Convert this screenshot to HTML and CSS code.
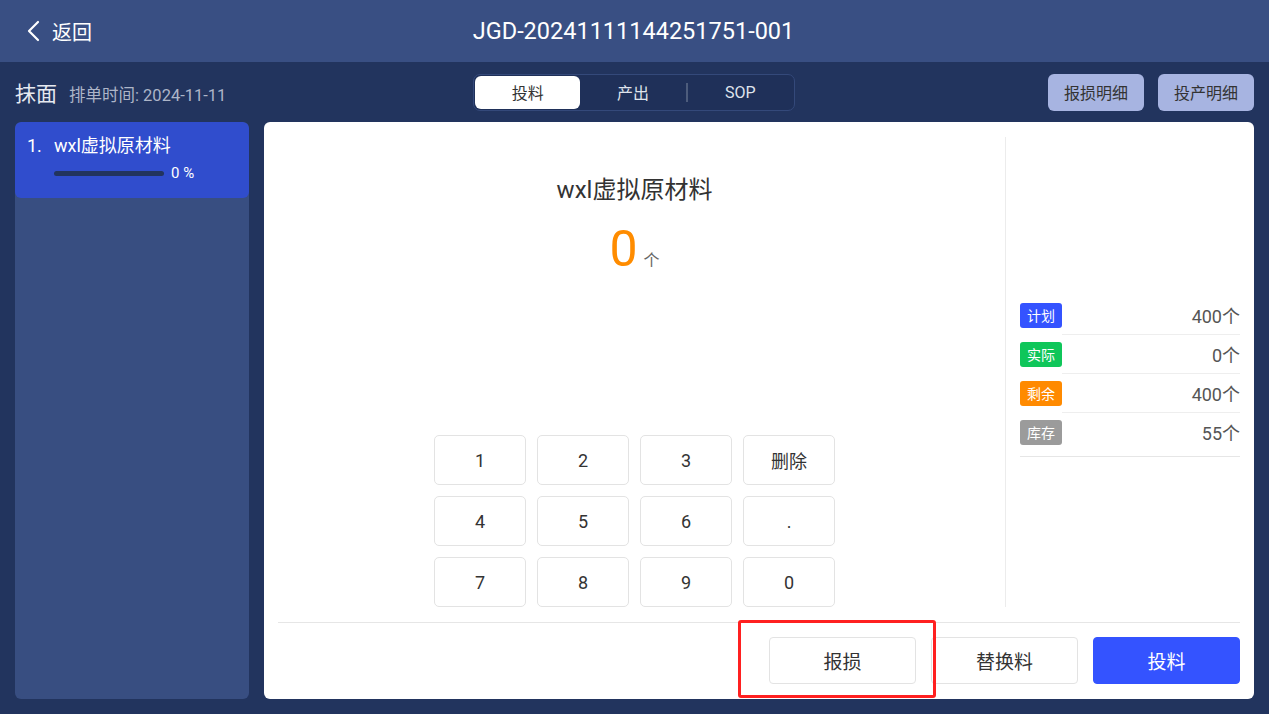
FILE: index.html
```html
<!DOCTYPE html>
<html lang="zh-CN">
<head>
  <meta charset="UTF-8">
  <title>投料</title>
  <link rel="stylesheet" href="styles.css">
</head>
<body>
  <!-- Top bar -->
  <div class="topbar">
    <div class="back">
      <svg class="back-icon" width="16" height="22" viewBox="0 0 16 22">
        <polyline points="12,2 3,11 12,20" fill="none" stroke="#ffffff" stroke-width="2.2" stroke-linecap="round" stroke-linejoin="round"/>
      </svg>
      <span>返回</span>
    </div>
    <div class="order-no">JGD-20241111144251751-001</div>
  </div>

  <!-- Sub header -->
  <div class="subbar">
    <div class="proc">
      <span class="proc-name">抹面</span>
      <span class="proc-date">排单时间: 2024-11-11</span>
    </div>
    <div class="tabs">
      <div class="tab active">投料</div>
      <div class="tab">产出</div>
      <div class="tab tab-sep">SOP</div>
    </div>
    <div class="actions">
      <button class="light-btn">报损明细</button>
      <button class="light-btn">投产明细</button>
    </div>
  </div>

  <div class="main">
    <!-- Material list -->
    <div class="side">
      <div class="item active">
        <div class="item-name"><span class="item-no">1.</span>wxl虚拟原材料</div>
        <div class="item-progress">
          <div class="bar"><div class="bar-fill" style="width: 0%"></div></div>
          <span class="pct">0 %</span>
        </div>
      </div>
    </div>

    <!-- Input card -->
    <div class="card">
      <div class="card-top">
        <div class="entry">
          <div class="mat-name">wxl虚拟原材料</div>
          <div class="qty"><span class="qty-num">0</span><span class="qty-unit">个</span></div>
          <div class="keypad">
            <button class="key">1</button>
            <button class="key">2</button>
            <button class="key">3</button>
            <button class="key">删除</button>
            <button class="key">4</button>
            <button class="key">5</button>
            <button class="key">6</button>
            <button class="key">.</button>
            <button class="key">7</button>
            <button class="key">8</button>
            <button class="key">9</button>
            <button class="key">0</button>
          </div>
        </div>
        <div class="stats">
          <div class="stat-list">
            <div class="stat">
              <span class="tag tag-blue">计划</span>
              <span class="stat-val">400个</span>
            </div>
            <div class="stat">
              <span class="tag tag-green">实际</span>
              <span class="stat-val">0个</span>
            </div>
            <div class="stat">
              <span class="tag tag-orange">剩余</span>
              <span class="stat-val">400个</span>
            </div>
            <div class="stat">
              <span class="tag tag-grey">库存</span>
              <span class="stat-val">55个</span>
            </div>
          </div>
        </div>
      </div>
      <div class="card-bottom">
        <button class="btn">报损</button>
        <button class="btn">替换料</button>
        <button class="btn btn-primary">投料</button>
      </div>
      <div class="highlight"></div>
    </div>
  </div>
</body>
</html>
```

FILE: styles.css
```css
* {
  box-sizing: border-box;
}

body {
  margin: 0;
  height: 100vh;
  background-color: #22345e;
  font-family: Roboto, "Noto Sans CJK SC", sans-serif;
  color: #333;
  display: flex;
  flex-direction: column;
  overflow: hidden;
}

button {
  font-family: inherit;
  cursor: pointer;
}

/* top bar */
.topbar {
  height: 62px;
  background-color: #394f83;
  display: flex;
  align-items: center;
  color: #fff;
}

.back {
  display: flex;
  align-items: center;
  padding-left: 26px;
  font-size: 20px;
  gap: 10px;
}

.order-no {
  flex: 1;
  text-align: center;
  font-size: 23.5px;
  margin-right: 94px;
}

/* sub header */
.subbar {
  height: 60px;
  display: flex;
  align-items: center;
  padding: 0 15px;
}

.proc {
  width: 458px;
  display: flex;
  align-items: baseline;
  gap: 12px;
}

.proc-name {
  font-size: 21px;
  color: #e6e9f0;
}

.proc-date {
  font-size: 16.5px;
  color: #adb5c8;
}

.tabs {
  display: flex;
  width: 322px;
  height: 37px;
  padding: 1px;
  border: 1px solid #34497a;
  border-radius: 7px;
  background-color: #1f3059;
}

.tab {
  flex: 1;
  display: flex;
  align-items: center;
  justify-content: center;
  font-size: 16px;
  color: #dfe3ec;
  border-radius: 6px;
}

.tab.active {
  background-color: #fff;
  color: #333;
}

.tab-sep {
  border-left: 2px solid #4d5c7c;
  border-radius: 0;
  margin: 7px 0;
}

.actions {
  margin-left: auto;
  display: flex;
  gap: 14px;
}

.light-btn {
  width: 96px;
  height: 37px;
  border: none;
  border-radius: 6px;
  background-color: #a7b4e1;
  color: #333;
  font-size: 16px;
}

/* main */
.main {
  flex: 1;
  display: flex;
  gap: 15px;
  padding: 0 15px 15px;
}

.side {
  width: 234px;
  background-color: #384e81;
  border-radius: 6px;
  overflow: hidden;
}

.item {
  height: 76px;
  padding: 12px 12px 0;
  color: #fff;
}

.item.active {
  background-color: #304dcd;
  border-radius: 6px;
}

.item-name {
  font-size: 18px;
  line-height: 24px;
}

.item-no {
  display: inline-block;
  width: 27px;
}

.item-progress {
  display: flex;
  align-items: center;
  padding-left: 27px;
  margin-top: 6px;
  gap: 7px;
}

.bar {
  width: 110px;
  height: 5px;
  border-radius: 3px;
  background-color: #22345e;
}

.bar-fill {
  height: 100%;
  border-radius: 3px;
  background-color: #ff8a00;
}

.pct {
  font-size: 15px;
}

.card {
  flex: 1;
  background-color: #fff;
  border-radius: 6px;
  padding: 15px 14px 15px;
  display: flex;
  flex-direction: column;
  position: relative;
}

.card-top {
  flex: 1;
  display: flex;
}

.entry {
  flex: 1;
  display: flex;
  flex-direction: column;
  align-items: center;
  padding-top: 38px;
  padding-right: 14px;
}

.mat-name {
  font-size: 24px;
  line-height: 30px;
  color: #333;
}

.qty {
  margin-top: 16px;
  display: flex;
  align-items: baseline;
  gap: 6px;
}

.qty-num {
  font-size: 50px;
  line-height: 56px;
  color: #ff8c00;
}

.qty-unit {
  font-size: 16px;
  color: #666;
}

.keypad {
  margin-top: auto;
  display: grid;
  grid-template-columns: repeat(4, 92px);
  grid-auto-rows: 50px;
  gap: 11px;
}

.key {
  border: 1px solid #e3e3e3;
  border-radius: 5px;
  background-color: #fff;
  font-size: 18px;
  color: #333;
}

.stats {
  width: 235px;
  border-left: 1px solid #ececec;
  padding-left: 14px;
  display: flex;
  flex-direction: column;
  justify-content: center;
  padding-top: 8px;
}

.stat-list {
  border-bottom: 1px solid #e6e6e6;
  padding-bottom: 4px;
}

.stat {
  display: flex;
  height: 39px;
}

.tag {
  align-self: center;
  width: 42px;
  height: 25px;
  border-radius: 3px;
  color: #fff;
  font-size: 14px;
  display: flex;
  align-items: center;
  justify-content: center;
}

.tag-blue { background-color: #3453ff; }
.tag-green { background-color: #0fc65a; }
.tag-orange { background-color: #ff8a00; }
.tag-grey { background-color: #9b9b9b; }

.stat-val {
  flex: 1;
  display: flex;
  align-items: center;
  justify-content: flex-end;
  font-size: 18px;
  color: #555;
  border-bottom: 1px solid #eeeeee;
}

.stat:last-child .stat-val {
  border-bottom: none;
}

.card-bottom {
  border-top: 1px solid #e6e6e6;
  margin-top: 15px;
  padding-top: 14px;
  display: flex;
  justify-content: flex-end;
  gap: 15px;
}

.btn {
  width: 147px;
  height: 47px;
  border: 1px solid #e3e3e3;
  border-radius: 4px;
  background-color: #fff;
  font-size: 19px;
  color: #333;
}

.btn-primary {
  background-color: #3453ff;
  border-color: #3453ff;
  color: #fff;
}

/* annotation frame around the 报损 button */
.highlight {
  position: absolute;
  left: 474px;
  top: 498px;
  width: 198px;
  height: 78px;
  border: 3px solid #ff2020;
  border-radius: 3px;
  pointer-events: none;
}
```
